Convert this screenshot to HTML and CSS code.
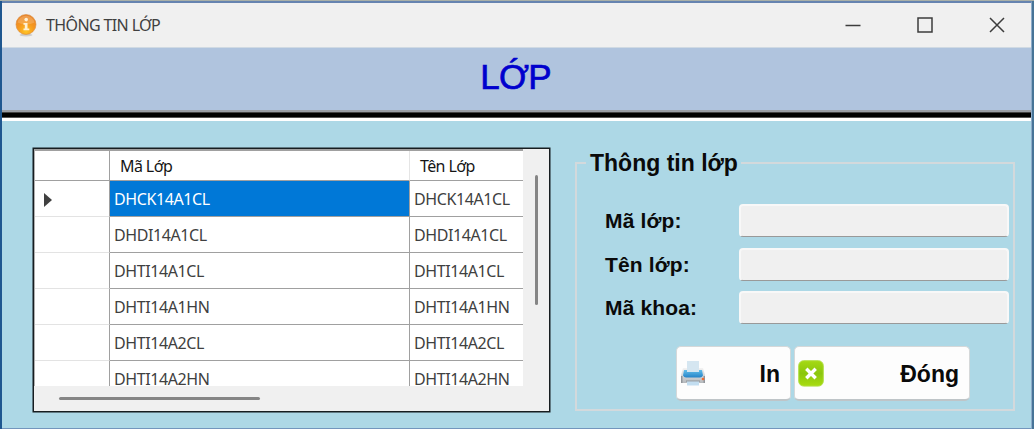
FILE: index.html
```html
<!DOCTYPE html>
<html lang="vi">
<head>
<meta charset="utf-8">
<title>THÔNG TIN LỚP</title>
<link rel="stylesheet" href="styles.css">
</head>
<body>
<div class="window">
  <header class="titlebar">
    <svg class="app-icon" width="22" height="24" viewBox="0 0 22 24">
      <defs><radialGradient id="orange" cx=".5" cy=".85" r=".8"><stop offset="0" stop-color="#ffc425"/><stop offset=".55" stop-color="#f5961e"/><stop offset="1" stop-color="#e9862c"/></radialGradient></defs>
      <ellipse cx="11" cy="21" rx="6.5" ry="1.5" fill="#cfcfcf"/>
      <circle cx="11" cy="10.500" r="10" fill="url(#orange)" stroke="#d98a3a" stroke-width=".6"/>
      <path d="M2.500 8.500a8.600 8 0 0 1 17 0q-8 4-17 0z" fill="#fff" opacity=".18"/>
      <circle cx="11.200" cy="5.600" r="1.800" fill="#fff1d5"/>
      <path d="M8.500 9h4v5.500h1.800v1.800H8.500v-1.800h1.300v-3.700H8.500z" fill="#fff1d5"/>
    </svg>
    <span class="caption">THÔNG TIN LỚP</span>
    <div class="controls">
      <svg width="16" height="16" viewBox="0 0 16 16"><path d="M.5 8.500h15"/></svg>
      <svg width="16" height="16" viewBox="0 0 16 16"><path d="M1 1h14v14H1z"/></svg>
      <svg width="16" height="16" viewBox="0 0 16 16"><path d="M1 1l14 14M15 1L1 15"/></svg>
    </div>
  </header>
  <h1 class="banner"><span>LỚP</span></h1>
  <main class="content">
    <section class="grid">
      <div class="table">
        <div class="row head"><div class="marker"></div><div class="cell first">Mã Lớp</div><div class="cell">Tên Lớp</div></div>
        <div class="row"><div class="marker"><svg width="8" height="14" viewBox="0 0 8 14"><path d="M0 0l8 7-8 7z" fill="#404040"/></svg></div><div class="cell first selected">DHCK14A1CL</div><div class="cell">DHCK14A1CL</div></div>
        <div class="row"><div class="marker"></div><div class="cell first">DHDI14A1CL</div><div class="cell">DHDI14A1CL</div></div>
        <div class="row"><div class="marker"></div><div class="cell first">DHTI14A1CL</div><div class="cell">DHTI14A1CL</div></div>
        <div class="row"><div class="marker"></div><div class="cell first">DHTI14A1HN</div><div class="cell">DHTI14A1HN</div></div>
        <div class="row"><div class="marker"></div><div class="cell first">DHTI14A2CL</div><div class="cell">DHTI14A2CL</div></div>
        <div class="row"><div class="marker"></div><div class="cell first">DHTI14A2HN</div><div class="cell">DHTI14A2HN</div></div>
      </div>
      <div class="vscroll"><div class="vthumb"></div></div>
      <div class="hscroll"><div class="hthumb"></div></div>
    </section>
    <fieldset class="group">
      <legend>Thông tin lớp</legend>
      <div class="form">
        <label for="ma-lop">Mã lớp:</label><input id="ma-lop" type="text" readonly>
        <label for="ten-lop">Tên lớp:</label><input id="ten-lop" type="text" readonly>
        <label for="ma-khoa">Mã khoa:</label><input id="ma-khoa" type="text" readonly>
      </div>
      <div class="actions">
        <button class="print" type="button">
          <svg width="26" height="26" viewBox="0 0 26 26">
            <defs>
              <linearGradient id="blue" x2="0" y2="1"><stop stop-color="#62bdea"/><stop offset="1" stop-color="#2584c8"/></linearGradient>
              <linearGradient id="body" x2="0" y2="1"><stop stop-color="#f3f3f3"/><stop offset="1" stop-color="#b5b9bd"/></linearGradient>
            </defs>
            <path d="M3 8h20l2 7v8H1v-8z" fill="url(#body)"/>
            <path d="M1 16h1.500v7H1zM23.500 16H25v7h-1.500z" fill="#92969b"/>
            <path d="M7 1h12v12H7z" fill="#d5e6f1"/>
            <path d="M4 10h3v2h12v-2h3l1 5.500q-1 2-3 2H6q-2 0-3-2z" fill="url(#blue)"/>
            <path d="M6 20.500h14v1.200H6z" fill="#8e969c"/>
            <path d="M7 21.500h12v4H7z" fill="#c2ddf0"/>
            <circle cx="23" cy="19" r="1.300" fill="#f26b32"/>
          </svg>
          <span>In</span>
        </button>
        <button class="close" type="button">
          <svg width="26" height="27" viewBox="0 0 26 27">
            <defs><linearGradient id="lime" x2="0" y2="1"><stop stop-color="#a5d913"/><stop offset=".5" stop-color="#8bc60e"/><stop offset="1" stop-color="#a8dc10"/></linearGradient></defs>
            <rect x=".7" y=".7" width="24.600" height="25.400" rx="5" fill="url(#lime)" stroke="#b2df45"/>
            <path d="M8.300 8.800l9.400 9.400M17.700 8.800l-9.400 9.400" stroke="#fff" stroke-width="3.400"/>
          </svg>
          <span>Đóng</span>
        </button>
      </div>
    </fieldset>
  </main>
</div>
</body>
</html>
```
FILE: styles.css
```css
* { box-sizing: border-box; }
body {
  margin: 0;
  height: 429px;
  padding: 0 2px;
  overflow: hidden;
  background: linear-gradient(90deg, #1f5790 50%, #477497 50%);
  border-top: 1px solid #a9b0a8;
  font-family: "Noto Sans", sans-serif;
}
.window {
  height: 428px;
  display: flex;
  flex-direction: column;
  border-top: 2px solid #6684b0;
  border-bottom: 1px solid #7396bd;
  border-right: 1px solid #8dabc9;
  background: #add8e6;
}
.titlebar {
  height: 44px;
  flex: none;
  display: flex;
  align-items: center;
  padding: 0 26px 0 13px;
  background: #f0f0f0;
}
.app-icon { margin-top: 1px; }
.caption { margin: 0 0 1px 9px; font-size: 16px; letter-spacing: -.62px; color: #404040; white-space: nowrap; }
.controls { margin: 0 0 1px auto; display: flex; gap: 56px; }
.controls svg { fill: none; stroke: #3c3c3c; stroke-width: 1.500; }
.banner {
  height: 75px;
  flex: none;
  margin: 0;
  padding: 10px 2px 0 0;
  background: linear-gradient(#d0dae3 1px, #b0c4de 1px 63px, #999da4 63px 65px, #444 65px 66px, #000 66px 70px, #555 70px 71px, #fff 71px 74px, #add8e6 74px);
  text-align: center;
  font: 400 35px/40px "Liberation Sans", Arial, sans-serif;
  letter-spacing: -.7px;
  color: #0000cd;
  -webkit-text-stroke: .7px #0000cd;
}
.content { flex: 1; display: flex; align-items: flex-start; padding: 26px 16px 0 31px; }
.grid {
  width: 517px;
  height: 264px;
  border: 1px solid #171d20;
  box-shadow: 0 0 0 .5px #171d20;
  display: grid;
  grid-template: 237px 1fr / 489px 1fr;
  background: #f0f0f0;
}
.table { overflow: hidden; background: #fff; border-top: 2px solid #a0a0a0; border-left: 1px solid #b0b0b0; }
.row { height: 36px; display: grid; grid-template: 100% / 75px 300px 1fr; color: #404040; font-size: 16px; letter-spacing: -.4px; }
.marker { border-right: 1px solid #a0a0a0; border-bottom: 1px solid #e3e3e3; display: flex; align-items: center; padding: 2px 0 0 9px; }
.cell { border-bottom: 1px solid #a0a0a0; line-height: 37px; padding-left: 4px; white-space: nowrap; }
.first { border-right: 1px solid #a0a0a0; }
.head { height: 30px; color: #151515; letter-spacing: -.6px; }
.head .marker, .head .cell { border-bottom-color: #a0a0a0; }
.head .cell { padding-left: 10px; line-height: 31px; }
.head .first { border-right-color: #e5e5e5; }
.selected { background: #0078d7; color: #fff; }
.vscroll { display: flex; padding: 26px 0 0 12px; }
.vthumb { width: 3px; height: 130px; border-radius: 2px; background: #858585; }
.hscroll { grid-column: 1 / -1; padding: 11px 0 0 25px; }
.hthumb { width: 201px; height: 3px; border-radius: 2px; background: #858585; }
.group {
  width: 440px;
  height: 263px;
  margin: 0 0 0 25px;
  padding: 0;
  border: 2px solid #d3d9dc;
  font: 700 21px/28px "Liberation Sans", Arial, sans-serif;
  color: #0a0a0a;
  min-width: 0;
}
legend { width: 155px; height: 30px; margin-left: 9px; padding: 1px 0 0 4px; font-size: 23px; white-space: nowrap; }
.form { display: grid; grid-template-columns: 134px 270px; grid-template-rows: 33px 33px 33px; row-gap: 10.500px; padding: 26px 0 0 28px; }
.form label { line-height: 33px; letter-spacing: .15px; white-space: nowrap; }
.form input { width: 270px; height: 33px; border: 2px solid #f8f8f8; border-bottom: 1px solid #999; border-radius: 4px; background: #f0f0f0; outline: none; }
.actions { display: flex; gap: 3px; padding: 22px 0 0 99px; }
.actions button { height: 55px; display: flex; align-items: center; justify-content: space-between; border: 1px solid #d5d8d9; border-bottom: 2px solid #bfc5c8; border-radius: 5px; background: #fdfdfd; font: 700 23px/28px "Liberation Sans", Arial, sans-serif; color: #0a0a0a; }
.actions span { padding-top: 2px; }
.print { width: 115px; padding: 0 10px 0 3px; }
.close { width: 176px; padding: 0 10px 0 3px; }
```
